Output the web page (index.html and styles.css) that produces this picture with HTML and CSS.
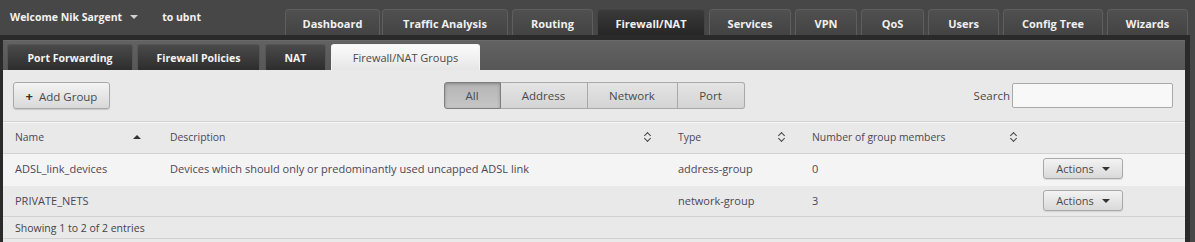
FILE: index.html
```html
<!DOCTYPE html>
<html lang="en">
<head>
    <meta charset="UTF-8">
    <title>Firewall/NAT Groups</title>
    <link rel="stylesheet" href="styles.css">
</head>
<body>

    <div class="topbar">
        <div class="user">
            <span class="welcome">Welcome Nik Sargent <span class="caret-light"></span></span>
            <span class="host">to ubnt</span>
        </div>
        <nav class="main-tabs">
            <a class="tab first" style="width:95px">Dashboard</a>
            <a class="tab" style="width:126px">Traffic Analysis</a>
            <a class="tab" style="width:81px">Routing</a>
            <a class="tab active" style="width:108px">Firewall/NAT</a>
            <a class="tab" style="width:82px">Services</a>
            <a class="tab" style="width:62px">VPN</a>
            <a class="tab" style="width:63px">QoS</a>
            <a class="tab" style="width:71px">Users</a>
            <a class="tab" style="width:100px">Config Tree</a>
            <a class="tab" style="width:81px">Wizards</a>
        </nav>
    </div>

    <div class="frame">
        <div class="subbar">
            <a class="subtab" style="width:126px">Port Forwarding</a>
            <a class="subtab" style="width:123px">Firewall Policies</a>
            <a class="subtab wide-gap" style="width:61px">NAT</a>
            <a class="subtab active wide-gap" style="width:149px">Firewall/NAT Groups</a>
        </div>

        <div class="content">
            <div class="toolbar">
                <div class="toolbar-left">
                    <button class="btn add-btn"><span class="plus">+</span> Add Group</button>
                </div>
                <div class="filters">
                    <button class="filter active" style="width:57px">All</button>
                    <button class="filter" style="width:87px">Address</button>
                    <button class="filter" style="width:90px">Network</button>
                    <button class="filter" style="width:67px">Port</button>
                </div>
                <div class="search">
                    <label for="search">Search</label>
                    <input type="text" id="search">
                </div>
            </div>

            <table class="grid">
                <colgroup>
                    <col style="width:155px">
                    <col style="width:508px">
                    <col style="width:134px">
                    <col style="width:232px">
                    <col>
                </colgroup>
                <thead>
                    <tr>
                        <th><div class="th">Name <span class="sort-up"></span></div></th>
                        <th><div class="th">Description <span class="sort-both"></span></div></th>
                        <th><div class="th">Type <span class="sort-both"></span></div></th>
                        <th><div class="th">Number of group members <span class="sort-both"></span></div></th>
                        <th></th>
                    </tr>
                </thead>
                <tbody>
                    <tr class="odd">
                        <td>ADSL_link_devices</td>
                        <td>Devices which should only or predominantly used uncapped ADSL link</td>
                        <td>address-group</td>
                        <td>0</td>
                        <td><button class="btn actions">Actions <span class="caret"></span></button></td>
                    </tr>
                    <tr class="even">
                        <td>PRIVATE_NETS</td>
                        <td></td>
                        <td>network-group</td>
                        <td>3</td>
                        <td><button class="btn actions">Actions <span class="caret"></span></button></td>
                    </tr>
                </tbody>
            </table>

            <div class="footer">Showing 1 to 2 of 2 entries</div>
        </div>
    </div>

</body>
</html>
```

FILE: styles.css
```css
* {
    margin: 0;
    padding: 0;
    box-sizing: border-box;
    font-family: 'Open Sans', 'DejaVu Sans', sans-serif;
}

body {
    background-color: #474747;
    height: 242px;
    overflow: hidden;
}

/* Top bar */
.topbar {
    display: flex;
    align-items: flex-end;
    height: 35px;
    padding-right: 7px;
}

.user {
    display: flex;
    align-self: center;
    align-items: center;
    padding-left: 10px;
    padding-bottom: 1px;
    font-size: 10.5px;
    font-weight: bold;
    color: #f2f2f2;
}

.welcome {
    display: flex;
    align-items: center;
}

.caret-light {
    display: inline-block;
    margin-left: 8px;
    border-left: 4px solid transparent;
    border-right: 4px solid transparent;
    border-top: 4px solid #d0d0d0;
}

.host {
    margin-left: 24px;
}

.main-tabs {
    display: flex;
    gap: 4px;
    margin-left: auto;
}

.tab {
    display: flex;
    justify-content: center;
    align-items: center;
    height: 26px;
    padding-top: 1px;
    font-size: 11px;
    font-weight: bold;
    color: #f0f0f0;
    background: linear-gradient(#505050, #434343);
    border: 1px solid #5e5e5e;
    border-bottom: none;
    border-radius: 4px 4px 0 0;
}

.tab.first {
    margin-right: -2px;
}

.tab.active {
    background: linear-gradient(#3a3a3a, #262626);
    border-color: #444;
}

/* Dark frame round the page */
.frame {
    border-top: 5px solid #2a2a2a;
    border-left: 3px solid #2a2a2a;
    border-right: 5px solid #2a2a2a;
    margin-right: 5px;
    background-color: #e9e9e9;
    height: 207px;
}

.subbar {
    display: flex;
    align-items: flex-end;
    gap: 4px;
    height: 30px;
    padding-left: 4px;
    background: linear-gradient(#626262, #575757);
    border-top: 1px solid #6a6a6a;
}

.subtab {
    display: flex;
    justify-content: center;
    align-items: center;
    height: 26px;
    font-size: 10.5px;
    font-weight: bold;
    color: #f4f4f4;
    background: linear-gradient(#4a4a4a, #2d2d2d);
    border: 1px solid #555;
    border-bottom: none;
    border-radius: 3px 3px 0 0;
}

.subtab.wide-gap {
    margin-left: 1px;
}

.subtab.active {
    font-weight: normal;
    font-size: 11px;
    color: #4a4a4a;
    background: linear-gradient(#fbfbfb, #e6e6e6);
    border-color: #f4f4f4;
}

.content {
    background-color: #e9e9e9;
}

/* Toolbar */
.toolbar {
    display: grid;
    grid-template-columns: 1fr auto 1fr;
    align-items: center;
    padding: 12px 12px 12px 10px;
    border-bottom: 1px solid #d2d2d2;
}

.btn {
    font-size: 11px;
    color: #4a4a4a;
    background: linear-gradient(#f3f3f3, #d9d9d9);
    border: 1px solid #a9a9a9;
    border-radius: 3px;
    cursor: pointer;
}

.add-btn {
    width: 97px;
    height: 27px;
    font-size: 11.5px;
    box-shadow: 0 1px 1px rgba(0, 0, 0, 0.15);
}

.plus {
    font-weight: bold;
    font-size: 13px;
    margin-right: 3px;
    color: #333;
}

.filters {
    display: flex;
    margin-left: 2px;
}

.filter {
    height: 27px;
    font-size: 11.5px;
    color: #4a4a4a;
    background: linear-gradient(#e4e4e4, #d4d4d4);
    border: 1px solid #a9a9a9;
    border-left: none;
}

.filter:first-child {
    border-left: 1px solid #8a8a8a;
    border-radius: 3px 0 0 3px;
}

.filter:last-child {
    border-radius: 0 3px 3px 0;
}

.filter.active {
    background: linear-gradient(#b4b4b4, #c6c6c6);
    border: 1px solid #7e7e7e;
    box-shadow: inset 0 1px 3px rgba(0, 0, 0, 0.25);
}

.search {
    display: flex;
    justify-content: flex-end;
    align-items: center;
    gap: 2px;
    font-size: 11.5px;
    color: #4a4a4a;
}

.search input {
    width: 161px;
    height: 25px;
    border: 1px solid #a9a9a9;
    border-radius: 2px;
    background-color: #f8f8f8;
    outline: none;
}

/* Table */
.grid {
    width: 100%;
    border-collapse: collapse;
    table-layout: fixed;
    font-size: 11px;
    color: #4d4656;
}

.grid th {
    height: 31px;
    padding-bottom: 2px;
    font-size: 10.4px;
    font-weight: normal;
    text-align: left;
    border-bottom: 1px solid #d2d2d2;
    border-top: 1px solid #f6f6f6;
}

.th {
    display: flex;
    justify-content: space-between;
    align-items: center;
    padding: 0 14px 0 12px;
}

.sort-up {
    display: inline-block;
    margin-right: 3px;
    border-left: 4px solid transparent;
    border-right: 4px solid transparent;
    border-bottom: 4px solid #333;
}

.sort-both {
    display: inline-block;
    width: 8px;
    height: 10px;
    position: relative;
}

.sort-both::before,
.sort-both::after {
    content: '';
    position: absolute;
    left: 1px;
    width: 4px;
    height: 4px;
    border-left: 1.5px solid #444;
    border-top: 1.5px solid #444;
}

.sort-both::before {
    top: 1px;
    transform: rotate(45deg);
}

.sort-both::after {
    top: 4px;
    transform: rotate(225deg);
}

.grid td {
    padding-left: 12px;
    white-space: nowrap;
}

.grid tr.odd td {
    height: 32px;
    padding-bottom: 2px;
    background-color: #f4f4f4;
}

.grid tr.even td {
    height: 31px;
    background-color: #e9e9e9;
    border-bottom: 1px solid #d2d2d2;
}

.grid td:last-child {
    padding-left: 11px;
}

.actions {
    width: 80px;
    height: 21px;
    display: flex;
    justify-content: center;
    align-items: center;
    gap: 8px;
    box-shadow: 0 1px 1px rgba(0, 0, 0, 0.1);
}

.caret {
    display: inline-block;
    border-left: 4px solid transparent;
    border-right: 4px solid transparent;
    border-top: 4px solid #333;
}

.footer {
    height: 22px;
    padding: 4px 0 0 12px;
    font-size: 10.5px;
    color: #444;
    border-bottom: 1px solid #d2d2d2;
}
```
